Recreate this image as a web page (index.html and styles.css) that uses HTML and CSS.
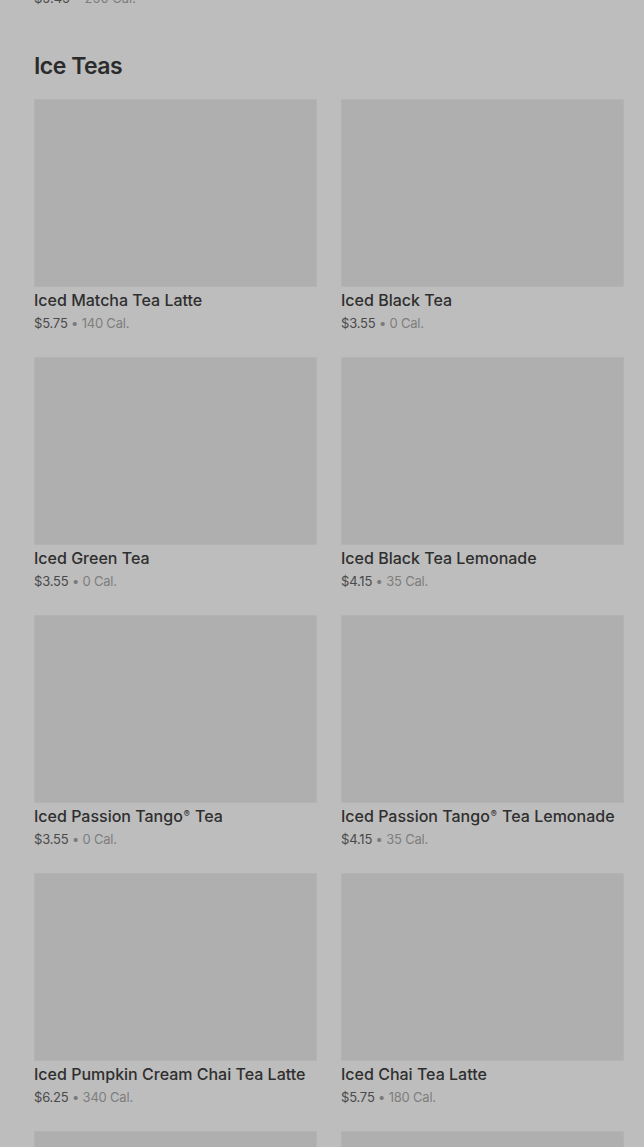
FILE: index.html
```html
<!DOCTYPE html>
<html lang="en">
<head>
<meta charset="utf-8">
<title>Ice Teas</title>
<link rel="stylesheet" href="styles.css">
</head>
<body>
<main class="page">
  <div class="prev-line"><span class="price">$5.45</span> • <span class="cal">250 Cal.</span></div>
  <section class="section">
    <h2 class="section-title">Ice Teas</h2>
    <div class="grid">
      <div class="card"><div class="thumb"></div><div class="name">Iced Matcha Tea Latte</div><div class="meta"><span class="price">$5.75</span> • <span class="cal">140 Cal.</span></div></div>
      <div class="card"><div class="thumb"></div><div class="name">Iced Black Tea</div><div class="meta"><span class="price">$3.55</span> • <span class="cal">0 Cal.</span></div></div>
      <div class="card"><div class="thumb"></div><div class="name">Iced Green Tea</div><div class="meta"><span class="price">$3.55</span> • <span class="cal">0 Cal.</span></div></div>
      <div class="card"><div class="thumb"></div><div class="name">Iced Black Tea Lemonade</div><div class="meta"><span class="price">$4.15</span> • <span class="cal">35 Cal.</span></div></div>
      <div class="card"><div class="thumb"></div><div class="name">Iced Passion Tango<span class="reg">®</span> Tea</div><div class="meta"><span class="price">$3.55</span> • <span class="cal">0 Cal.</span></div></div>
      <div class="card"><div class="thumb"></div><div class="name">Iced Passion Tango<span class="reg">®</span> Tea Lemonade</div><div class="meta"><span class="price">$4.15</span> • <span class="cal">35 Cal.</span></div></div>
      <div class="card"><div class="thumb"></div><div class="name">Iced Pumpkin Cream Chai Tea Latte</div><div class="meta"><span class="price">$6.25</span> • <span class="cal">340 Cal.</span></div></div>
      <div class="card"><div class="thumb"></div><div class="name">Iced Chai Tea Latte</div><div class="meta"><span class="price">$5.75</span> • <span class="cal">180 Cal.</span></div></div>
      <div class="card"><div class="thumb"></div><div class="name">Iced Green Tea Lemonade</div><div class="meta"><span class="price">$4.15</span> • <span class="cal">35 Cal.</span></div></div>
      <div class="card"><div class="thumb"></div><div class="name">Iced Peach Green Tea</div><div class="meta"><span class="price">$4.45</span> • <span class="cal">60 Cal.</span></div></div>
    </div>
  </section>
</main>
</body>
</html>
```

FILE: styles.css
```css
html, body {
  margin: 0;
  padding: 0;
  background: #bdbdbd;
}
body {
  font-family: Inter, "Noto Sans", "Liberation Sans", sans-serif;
  color: #2e2e2e;
  overflow: hidden;
  height: 1147px;
}
.page {
  padding: 0 20px 0 34px;
}
.prev-line {
  margin-top: -11px;
  font-size: 13px;
  line-height: 18px;
  color: #7a7a7a;
}
.price {
  color: #4a4a4a;
}
.cal {
  color: #7d7d7d;
}
.section {
  padding-top: 43px;
}
.section-title {
  margin: 0;
  font-size: 23px;
  line-height: 32px;
  font-weight: 600;
  letter-spacing: -0.5px;
  color: #2b2b2b;
}
.grid {
  margin-top: 17px;
  display: grid;
  grid-template-columns: 283px 283px;
  column-gap: 24px;
  row-gap: 25px;
}
.thumb {
  height: 188px;
  background: #afafaf;
  box-shadow: inset 0 0 0 1px #b3b3b3;
}
.name {
  margin-top: 3px;
  font-size: 16px;
  line-height: 20px;
  font-weight: 500;
  color: #2f2f2f;
  letter-spacing: 0;
  white-space: nowrap;
}
.reg {
  font-size: 9px;
  vertical-align: 5px;
  line-height: 0;
  margin: 0 1px;
}
.meta {
  margin-top: 4px;
  font-size: 13px;
  line-height: 18px;
  color: #7a7a7a;
  letter-spacing: -0.2px;
}
```
